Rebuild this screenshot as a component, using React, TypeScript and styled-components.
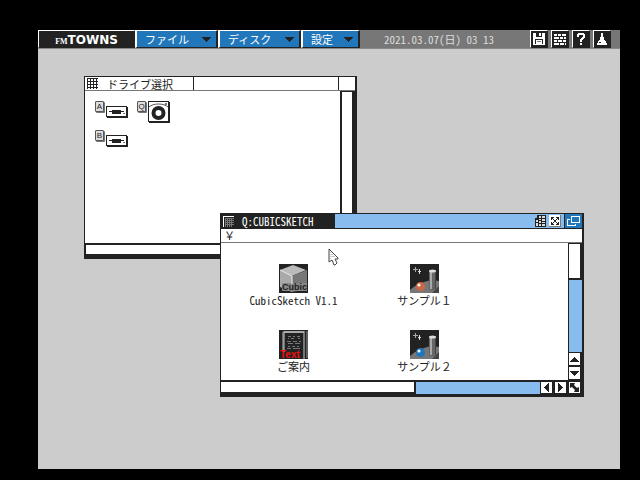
import React from 'react';
import styled, { createGlobalStyle, css } from 'styled-components';

const ink = '#222222';
const blue = '#2277bb';
const sky = '#88bbee';
const grey = '#777777';
const desk = '#cccccc';

const GlobalStyle = createGlobalStyle`
  * { box-sizing: border-box; }
  body {
    margin: 0;
    background: #000;
    color: ${ink};
    font: 11px/14px "Noto Sans CJK JP", sans-serif;
    font-feature-settings: "hwid";
  }
  button {
    margin: 0;
    padding: 0;
    border: 0;
    background: none;
    color: inherit;
    font: inherit;
    font-feature-settings: inherit;
  }
  svg { display: block; flex: none; }
`;

const Screen = styled.div`
  min-height: 100vh;
  padding: 30px 20px 11px 38px;
  display: flex;
`;

const Desktop = styled.main`
  position: relative;
  flex: 1;
  background: ${desk};
`;

const MenuBar = styled.header`
  display: flex;
  height: 19px;
  background: ${grey};
  border-bottom: 1px solid #888;
`;

const raised = css`
  border: 1px solid ${ink};
  border-top-color: #fff;
  border-left-color: #fff;
`;

const Logo = styled.div`
  ${raised}
  width: 97px;
  padding-top: 1px;
  display: flex;
  align-items: center;
  justify-content: center;
  background: ${ink};
  color: #fff;
  font-feature-settings: normal;
`;

const LogoSmall = styled.span`
  padding-top: 4px;
  font: bold 8px/10px "Liberation Serif", serif;
`;

const LogoLarge = styled.span`
  font: bold 12px/16px "DejaVu Sans", sans-serif;
`;

const MenuButton = styled.button<{ $short?: boolean }>`
  ${raised}
  border-left-width: 2px;
  border-right-width: 2px;
  width: ${(p) => (p.$short ? 59 : 83)}px;
  padding: 0 5px 0 8px;
  display: flex;
  align-items: center;
  justify-content: space-between;
  background: ${blue};
  color: #fff;
`;

const Clock = styled.time`
  flex: 1;
  padding-left: 24px;
  line-height: 18px;
  color: #ddd;
  white-space: pre;
`;

const Tools = styled.nav`
  display: flex;
  gap: 3px;
  padding-right: 9px;
`;

const ToolButton = styled.button`
  ${raised}
  width: 18px;
  background: ${ink};
  color: #fff;
  display: grid;
  place-items: center;
`;

const Window = styled.section<{ $x: number; $y: number; $w: number; $h: number }>`
  position: absolute;
  left: ${(p) => p.$x}px;
  top: ${(p) => p.$y}px;
  width: ${(p) => p.$w}px;
  min-height: ${(p) => p.$h}px;
  display: flex;
  flex-direction: column;
  background: #fff;
  border: 1px solid ${ink};
  border-right-width: 2px;
  border-bottom-width: 3px;
`;

const TitleBar = styled.div<{ $active?: boolean }>`
  display: flex;
  height: ${(p) => (p.$active ? 15 : 14)}px;
  background: ${(p) => (p.$active ? sky : '#fff')};
  border-bottom: 1px solid ${(p) => (p.$active ? ink : grey)};
`;

const TitleTab = styled.h2<{ $active?: boolean }>`
  width: ${(p) => (p.$active ? 114 : 109)}px;
  margin: 0;
  padding-left: 2px;
  display: flex;
  align-items: center;
  gap: ${(p) => (p.$active ? 8 : 9)}px;
  font-size: 11px;
  line-height: 12px;
  font-weight: normal;
  white-space: nowrap;
  background: ${(p) => (p.$active ? ink : '#fff')};
  color: ${(p) => (p.$active ? '#fff' : ink)};
  border-right: 1px solid ${ink};
`;

const TitleButtons = styled.div`
  display: flex;
  align-items: center;
  gap: 3px;
  margin-left: auto;
`;

const TitleSlot = styled.div`
  width: 17px;
  margin-left: auto;
  border-left: 1px solid ${ink};
`;

const RestoreButton = styled.button`
  align-self: stretch;
  width: 18px;
  display: grid;
  place-items: center;
  background: ${blue};
  border-left: 1px solid ${ink};
`;

const PathRow = styled.div`
  height: 14px;
  padding-left: 3px;
  line-height: 12px;
  font-feature-settings: normal;
  border-bottom: 1px solid ${grey};
`;

const Body = styled.div`
  flex: 1;
  display: flex;
`;

const DriveGrid = styled.div`
  flex: 1;
  padding: 10px;
  display: grid;
  grid-template-columns: 42px 1fr;
  grid-auto-rows: 29px;
`;

const Drive = styled.button`
  display: flex;
  align-items: flex-start;
  gap: 2px;
`;

const DriveLetter = styled.span`
  width: 9px;
  height: 11px;
  border: 1px solid #555;
  border-radius: 1px;
  box-shadow: 1px 1px 0 #777;
  background: #ddd;
  font: 8px/9px "Liberation Sans", sans-serif;
  text-align: center;
`;

const DrivePicture = styled.span<{ $disc?: boolean }>`
  padding-top: ${(p) => (p.$disc ? 0 : 5)}px;
`;

const FileGrid = styled.div`
  flex: 1;
  padding: 21px 78px 0 7px;
  display: grid;
  grid-template-columns: repeat(2, 1fr);
  grid-auto-rows: 44px;
  row-gap: 22px;
`;

const FileItem = styled.button<{ $wide: boolean }>`
  display: flex;
  flex-direction: column;
  align-items: center;
  white-space: nowrap;
  font-feature-settings: ${(p) => (p.$wide ? 'normal' : '"hwid"')};
`;

const EmptyRail = styled.div`
  width: 15px;
  border-left: 2px solid ${ink};
  border-right: 3px solid ${ink};
  border-top: 1px solid ${ink};
`;

const EmptyFoot = styled.div`
  height: 13px;
  border-top: 2px solid ${ink};
  border-bottom: 2px solid ${ink};
  border-left: 1px solid ${ink};
`;

const Rail = styled.div`
  width: 14px;
  display: flex;
  flex-direction: column;
  background: ${sky};
  border-left: 1px solid ${ink};
`;

const Foot = styled.div`
  height: 14px;
  display: flex;
  background: ${sky};
  border-top: 2px solid ${ink};
`;

const VThumb = styled.button`
  height: 37px;
  margin-bottom: auto;
  background: #fff;
  border: solid ${ink};
  border-width: 1px 2px 2px 0;
`;

const HThumb = styled.button`
  width: 54%;
  margin-right: auto;
  background: #fff;
  border: solid ${ink};
  border-width: 0 2px 2px 0;
`;

const Arrow = styled.button<{ $vertical?: boolean }>`
  width: ${(p) => (p.$vertical ? 13 : 14)}px;
  height: ${(p) => (p.$vertical ? 14 : 12)}px;
  display: grid;
  place-items: center;
  background: #fff;
  border: solid ${ink};
  border-width: ${(p) => (p.$vertical ? '1px 2px 1px 0' : '0 2px 1px 1px')};
`;

const Pointer = styled.svg`
  position: absolute;
  left: 290px;
  top: 218px;
`;

const Caret = () => (
  <svg width="9" height="5" viewBox="0 0 9 5">
    <path d="M0 0H9V1H8V2H7V3H6V4H5V5H4V4H3V3H2V2H1V1H0Z" fill={ink} />
  </svg>
);

const GridMark = ({ inverted }: { inverted?: boolean }) => (
  <svg width="11" height="11" viewBox="0 0 11 11" shapeRendering="crispEdges">
    <path
      d={
        inverted
          ? 'M2 2H11V3H2ZM2 4H11V5H2ZM2 6H11V7H2ZM2 8H11V9H2ZM2 2H3V11H2ZM4 2H5V11H4ZM6 2H7V11H6ZM8 2H9V11H8Z'
          : 'M0 0H11V1H0ZM0 3H11V4H0ZM0 6H11V7H0ZM0 9H11V10H0ZM0 0H1V11H0ZM3 0H4V11H3ZM6 0H7V11H6ZM9 0H10V11H9Z'
      }
      fill={inverted ? '#777' : ink}
    />
    {inverted && <path d="M0 0H11V1H1V11H0Z" fill="#fff" />}
  </svg>
);

const FloppyIcon = () => (
  <svg width="14" height="14" viewBox="0 0 14 14" shapeRendering="crispEdges">
    <path d="M1 1H12L13 2V13H1Z" fill="#fff" />
    <path d="M4 1H10V5H4ZM3 7H11V12H3Z" fill={ink} />
    <path d="M7 1H9V4H7ZM4 8H10V12H4Z" fill="#fff" />
    <path d="M5 9H9V10H5Z" fill={grey} />
  </svg>
);

const BricksIcon = () => (
  <svg width="14" height="14" viewBox="0 0 14 14" shapeRendering="crispEdges">
    <path
      d="M1 2H4V4H1ZM5 2H8V4H5ZM9 2H13V4H9ZM1 5H6V7H1ZM7 5H10V7H7ZM11 5H13V7H11ZM1 8H4V10H1ZM5 8H9V10H5ZM10 8H13V10H10ZM1 11H6V13H1ZM7 11H11V13H7ZM12 11H13V13H12Z"
      fill="#fff"
    />
  </svg>
);

const QuestionIcon = () => (
  <svg width="14" height="14" viewBox="0 0 14 14" shapeRendering="crispEdges">
    <path d="M4 1H10V2H11V6H10V7H9V8H8V10H6V7H7V6H8V5H9V3H5V5H3V2H4ZM6 11H8V13H6Z" fill="#fff" />
  </svg>
);

const FlaskIcon = () => (
  <svg width="14" height="14" viewBox="0 0 14 14" shapeRendering="crispEdges">
    <path d="M6 1H8V5H9V8H10V9H11V11H12V13H2V11H3V9H4V8H5V5H6Z" fill="#fff" />
    <path d="M4 10H6V11H4Z" fill={ink} />
  </svg>
);

const FloppyDrive = () => (
  <svg width="22" height="12" viewBox="0 0 22 12" shapeRendering="crispEdges">
    <path d="M0 0H21V1H22V12H1V11H0Z" fill={ink} />
    <path d="M1 1H20V10H1Z" fill="#fff" />
    <path d="M3 5H6V4H15V5H18V6H15V8H6V6H3Z" fill={ink} />
    <path d="M17 7H19V8H17Z" fill={grey} />
  </svg>
);

const DiscDrive = () => (
  <svg width="22" height="22" viewBox="0 0 22 22">
    <path d="M0 0H21V1H22V22H1V21H0Z" fill={ink} />
    <path d="M1 1H20V20H1Z" fill="#fff" />
    <path d="M1 6C5 2 16 2 20 6" fill="none" stroke="#555" />
    <circle cx="10.5" cy="12" r="5" fill="#fff" stroke={ink} strokeWidth="4" />
    <path d="M17 2H19V4H17Z" fill={grey} />
  </svg>
);

const CubeIcon = () => (
  <svg width="29" height="29" viewBox="0 0 29 29">
    <path d="M0 0H29V29H0Z" fill={ink} />
    <path d="M14 1L27 6L13 12L1 6Z" fill="#bbb" />
    <path d="M1 6L13 12V28L1 23Z" fill="#aaa" />
    <path d="M13 12L28 6V25L13 28Z" fill="#777" />
    <path d="M3 19H28V27H3Z" fill="#888" />
    <path d="M1 6L13 12V20" fill="none" stroke="#eee" />
    <text x="3" y="26" fill={ink} fontFamily="Liberation Sans" fontSize="9" fontWeight="bold">Cubic</text>
  </svg>
);

const BookIcon = () => (
  <svg width="29" height="29" viewBox="0 0 29 29">
    <path d="M0 0H29V29H0Z" fill={ink} />
    <path d="M5 22V2H25V29" fill="none" stroke="#777" strokeWidth="2" />
    <path d="M28 1V28" stroke="#999" />
    <path d="M5 2H25" stroke="#ddd" strokeWidth="1" />
    <path d="M4 2V22" stroke="#bbb" />
    <path
      d="M9 6.5H12M14 6.5H16M18 6.5H21M9 8.5H10M12 8.5H15M19 8.5H21M8 11.5H12M14 11.5H18M20 11.5H22M9 13.5H14M16 13.5H21M9 16.5H11M13 16.5H16M18 16.5H20M8 18.5H12M14 18.5H21"
      stroke="#777"
    />
    <text x="1" y="28" fill="#ee1111" fontFamily="Liberation Sans" fontSize="10" fontWeight="bold">Text</text>
  </svg>
);

const SceneIcon = ({ ball }: { ball: string }) => (
  <svg width="29" height="29" viewBox="0 0 29 29">
    <path d="M0 0H29V29H0Z" fill={ink} />
    <path d="M0 29V26L5 22L14 18L21 16L29 17V29Z" fill="#777" />
    <path d="M22 29L29 22V29Z" fill="#444" />
    <path d="M19 7H26V25C24 27 21 27 19 25Z" fill="#666" />
    <path d="M20 8H22V25H20Z" fill="#aaa" />
    <path d="M25 8H26V25H25Z" fill="#444" />
    <ellipse cx="22.5" cy="7" rx="3.5" ry="1.5" fill="#ddd" />
    <path d="M5.500 3V8M3 5.500H8" stroke="#aaa" />
    <path d="M9.500 5V10M8 7.500H11" stroke="#ddd" />
    <circle cx="10.500" cy="22.500" r="4.500" fill={ball} />
    <circle cx="9" cy="21" r="1.500" fill="#fff" />
  </svg>
);

const GridIcon = () => (
  <svg width="11" height="12" viewBox="0 0 11 12" shapeRendering="crispEdges">
    <path d="M0 3H2V0H11V12H0Z" fill={ink} />
    <path d="M4 1H6V3H4ZM7 1H10V3H7ZM4 4H6V5H4ZM7 4H10V6H7ZM1 5H3V7H1ZM4 6H6V8H4ZM7 7H10V8H7ZM1 8H3V11H1ZM4 9H6V11H4ZM7 9H10V11H7Z" fill="#ddd" />
  </svg>
);

const ExpandIcon = () => (
  <svg width="12" height="12" viewBox="0 0 12 12" shapeRendering="crispEdges">
    <path d="M0 0H12V12H0Z" fill={grey} />
    <path d="M0 0H11V11H0Z" fill="#fff" />
    <path d="M2 2H5V3H4V4H5V5H4V4H3V5H2ZM7 2H10V5H9V4H8V5H7V4H8V3H7ZM5 5H7V7H5ZM2 7H3V8H4V7H5V8H4V9H5V10H2ZM9 7H10V10H7V9H8V8H7V7H8V8H9Z" fill={ink} />
  </svg>
);

const RestoreIcon = () => (
  <svg width="13" height="11" viewBox="0 0 13 11" shapeRendering="crispEdges">
    <path
      d="M4 0H13V7H4ZM5 1V6H12V1ZM0 3H3V4H1V9H8V8H9V10H0Z"
      fill="#fff"
      fillRule="evenodd"
    />
  </svg>
);

const turns = { up: 0, right: 90, down: 180, left: 270 };

const ArrowIcon = ({ dir }: { dir: keyof typeof turns }) => (
  <svg width="9" height="9" viewBox="0 0 9 9">
    <path
      d="M4 2H5V3H6V4H7V5H8V6H9V7H0V6H1V5H2V4H3V3H4Z"
      fill={ink}
      transform={`rotate(${turns[dir]} 4.500 4.500)`}
    />
  </svg>
);

const ResizeIcon = () => (
  <svg width="9" height="9" viewBox="0 0 9 9">
    <path d="M0 0H5L4 2L7 5L9 4V9H4L5 7L2 4L0 5Z" fill={ink} />
  </svg>
);

const files = [
  { name: 'CubicSketch V1.1', wide: false, icon: <CubeIcon /> },
  { name: 'サンプル１', wide: true, icon: <SceneIcon ball="#cc6644" /> },
  { name: 'ご案内', wide: true, icon: <BookIcon /> },
  { name: 'サンプル２', wide: true, icon: <SceneIcon ball={blue} /> },
];

const drives = [
  { letter: 'A', disc: false },
  { letter: 'Q', disc: true },
  { letter: 'B', disc: false },
];

export default function App() {
  return (
    <Screen>
      <GlobalStyle />
      <Desktop>
        <MenuBar>
          <Logo>
            <LogoSmall>FM</LogoSmall>
            <LogoLarge>TOWNS</LogoLarge>
          </Logo>
          <MenuButton>ファイル<Caret /></MenuButton>
          <MenuButton>ディスク<Caret /></MenuButton>
          <MenuButton $short>設定<Caret /></MenuButton>
          <Clock dateTime="2021-03-07T03:13">2021.03.07(日) 03 13</Clock>
          <Tools>
            <ToolButton aria-label="保存"><FloppyIcon /></ToolButton>
            <ToolButton aria-label="壁紙"><BricksIcon /></ToolButton>
            <ToolButton aria-label="ヘルプ"><QuestionIcon /></ToolButton>
            <ToolButton aria-label="ツール"><FlaskIcon /></ToolButton>
          </Tools>
        </MenuBar>

        <Window $x={46} $y={46} $w={273} $h={183}>
          <TitleBar>
            <TitleTab><GridMark />ドライブ選択</TitleTab>
            <TitleSlot />
          </TitleBar>
          <Body>
            <DriveGrid>
              {drives.map((d) => (
                <Drive key={d.letter}>
                  <DriveLetter>{d.letter}</DriveLetter>
                  <DrivePicture $disc={d.disc}>{d.disc ? <DiscDrive /> : <FloppyDrive />}</DrivePicture>
                </Drive>
              ))}
            </DriveGrid>
            <EmptyRail />
          </Body>
          <EmptyFoot />
        </Window>

        <Window $x={182} $y={183} $w={364} $h={184}>
          <TitleBar $active>
            <TitleTab $active><GridMark inverted />Q:CUBICSKETCH</TitleTab>
            <TitleButtons>
              <button aria-label="一覧"><GridIcon /></button>
              <button aria-label="拡大"><ExpandIcon /></button>
              <RestoreButton aria-label="元に戻す"><RestoreIcon /></RestoreButton>
            </TitleButtons>
          </TitleBar>
          <PathRow>￥</PathRow>
          <Body>
            <FileGrid>
              {files.map((f) => (
                <FileItem key={f.name} $wide={f.wide}>{f.icon}{f.name}</FileItem>
              ))}
            </FileGrid>
            <Rail>
              <VThumb aria-label="縦スクロール" />
              <Arrow $vertical aria-label="上"><ArrowIcon dir="up" /></Arrow>
              <Arrow $vertical aria-label="下"><ArrowIcon dir="down" /></Arrow>
            </Rail>
          </Body>
          <Foot>
            <HThumb aria-label="横スクロール" />
            <Arrow aria-label="左"><ArrowIcon dir="left" /></Arrow>
            <Arrow aria-label="右"><ArrowIcon dir="right" /></Arrow>
            <Arrow aria-label="サイズ変更"><ResizeIcon /></Arrow>
          </Foot>
        </Window>

        <Pointer width="11" height="18" viewBox="0 0 11 18">
          <path d="M1 1L10 10V11H7L9 15L7 17H6L4 12L1 14Z" fill="#fff" stroke="#444" />
          <path d="M2 4V12M4 6V10M6 8V10" stroke="#999" strokeDasharray="1 1" />
        </Pointer>
      </Desktop>
    </Screen>
  );
}
